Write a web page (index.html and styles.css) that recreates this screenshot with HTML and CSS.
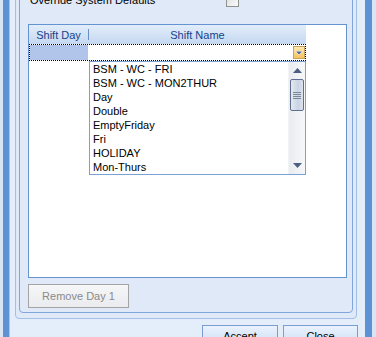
FILE: index.html
```html
<!doctype html>
<html>
<head>
<meta charset="utf-8">
<title>Shift Defaults</title>
<link rel="stylesheet" href="styles.css">
</head>
<body>
<div class="win">
 <div class="client">
  <div class="outer-box">
   <div class="inner-box">
    <div class="override"><span class="lbl">Override System Defaults</span><span class="chk"></span></div>
    <div class="grid">
     <div class="grid-head"><div class="col-day">Shift Day</div><div class="sep"></div><div class="col-name">Shift Name</div></div>
     <div class="grid-row"><div class="cell-day"></div><div class="cell-name"><span class="combo-btn"><svg width="10" height="11" viewBox="0 0 10 11"><path d="M1 4h8L5 8z" fill="#fff"/><path d="M2 4.5h6L5 7.5z" fill="#4a6496"/></svg></span></div></div>
     <div class="drop">
      <ul class="items">
       <li>BSM - WC - FRI</li>
       <li>BSM - WC - MON2THUR</li>
       <li>Day</li>
       <li>Double</li>
       <li>EmptyFriday</li>
       <li>Fri</li>
       <li>HOLIDAY</li>
       <li>Mon-Thurs</li>
      </ul>
      <div class="sb">
       <div class="sb-arrow"><svg width="9" height="5" viewBox="0 0 9 5"><path d="M4.5 0L9 5H0z" fill="#4d5f80"/></svg></div>
       <div class="sb-thumb"><span></span><span></span><span></span><span></span></div>
       <div class="sb-track"></div>
       <div class="sb-arrow"><svg width="9" height="5" viewBox="0 0 9 5"><path d="M0 0h9L4.5 5z" fill="#4d5f80"/></svg></div>
      </div>
     </div>
    </div>
    <button class="btn-remove" disabled>Remove Day 1</button>
   </div>
  </div>
  <div class="footer">
   <button class="btn accept">Accept</button>
   <button class="btn close">Close</button>
  </div>
 </div>
</div>
</body>
</html>
```

FILE: styles.css
```css
html,body{margin:0;padding:0}
body{width:376px;height:337px;overflow:hidden;background:#d9e5f4;font-family:"Liberation Sans",Arial,sans-serif;font-size:11px;color:#000}
.win{margin:-30px 0 0 3px;width:356px;border-left:6px solid #5c93d5;border-right:7px solid #5c93d5;height:400px}
.client{border-left:1px solid #a9c5ec;background:#e4edfa;height:100%}
.outer-box{margin:0 8px 0 5px;border:1px solid #a3bfe6;border-radius:0 0 4px 4px;padding:5px 3px 5px 3px;background:#dfe9f7}
.inner-box{border:1px solid #7fa5da;border-radius:0 0 4px 4px;padding:17px 5px 4px 8px}
.override{display:flex;align-items:center;height:13px;padding-left:2px}
.override .lbl{width:196px;line-height:13px}
.chk{width:11px;height:11px;border:1px solid #8e8f8f;background:linear-gradient(135deg,#dcdcdc,#fbfbfb)}
.grid{position:relative;margin-top:17px;width:317px;height:252px;border:1px solid #6593cf;background:#fff}
.grid-head{display:flex;align-items:center;width:277px;height:19px;background:linear-gradient(#e2edfa,#c5d8f1);color:#15428b}
.col-day{width:59px;text-align:center}
.sep{width:1px;height:11px;background:#6a8fc6}
.col-name{flex:1;text-align:center}
.grid-row{display:flex;width:275px;height:15px;border:1px dotted #000}
.cell-day{width:58px;background:#b1c5ea}
.cell-name{flex:1;display:flex;justify-content:flex-end;align-items:center}
.combo-btn{display:flex;align-items:center;justify-content:center;width:10px;height:11px;border:1px solid #c9a35e;background:linear-gradient(#fde9b0,#f7c35c)}
.drop{position:absolute;left:60px;top:36px;width:215px;height:112px;border:1px solid #7aa0d6;background:#fff;display:flex}
.items{flex:1;list-style:none;margin:0;padding:0 0 0 3px}
.items li{line-height:14px;white-space:nowrap}
.sb{width:17px;display:flex;flex-direction:column;background:linear-gradient(to right,#e9ecf0,#f6f7f9);border-left:1px solid #f2f3f5;box-sizing:border-box}
.sb-arrow{height:17px;display:flex;align-items:center;justify-content:center}
.sb-thumb{margin:0 1px;height:30px;border:1px solid #5f6f8f;border-radius:2px;background:linear-gradient(to right,#e3e9f2,#c9d3e2 60%,#dde4ee);display:flex;flex-direction:column;align-items:center;justify-content:center;gap:1px}
.sb-thumb span{width:8px;height:1px;background:#7c8798}
.sb-track{flex:1}
.btn-remove{display:block;margin-top:6px;width:101px;height:24px;padding:0;border:1px solid #a4a4a4;background:linear-gradient(#f5f6f8,#e9ebee);color:#8a8a8a;font:11px "Liberation Sans",Arial,sans-serif}
.footer{display:flex;justify-content:flex-end;gap:5px;padding-right:7px;margin-top:6px}
.btn{height:23px;padding:0 0 2px;border:1px solid #7a9dd2;background:linear-gradient(#eaf2fd,#c9dcf5);font:11px "Liberation Sans",Arial,sans-serif;color:#000}
.accept{width:76px}
.close{width:75px}
```
